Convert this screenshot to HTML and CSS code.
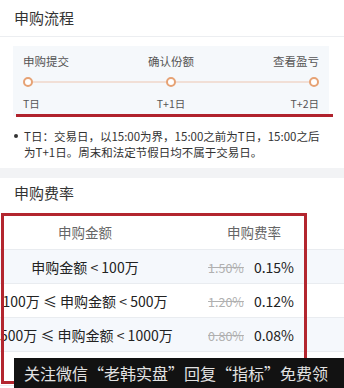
FILE: index.html
```html
<!DOCTYPE html>
<html>
<head>
<meta charset="utf-8">
<link rel="stylesheet" href="styles.css">
</head>
<body>
<div class="page">
  <div class="section-title first">申购流程</div>
  <div class="flow">
    <div class="flow-row labels">
      <span class="l">申购提交</span><span class="c">确认份额</span><span class="r">查看盈亏</span>
    </div>
    <div class="track">
      <span class="dot"></span><span class="dot"></span><span class="dot"></span>
    </div>
    <div class="flow-row dates">
      <span class="l">T日</span><span class="c">T+1日</span><span class="r">T+2日</span>
    </div>
  </div>
  <div class="note"><span class="bullet"></span><p>T日：交易日，以15:00为界，15:00之前为T日，15:00之后<br>为T+1日。周末和法定节假日均不属于交易日。</p></div>
  <div class="band"></div>
  <div class="section-title second">申购费率</div>
  <div class="table">
    <div class="tr head"><div class="c1">申购金额</div><div class="c2">申购费率</div></div>
    <div class="tr alt"><div class="c1">申购金额 &lt; 100万</div><div class="c2"><s>1.50%</s><span>0.15%</span></div></div>
    <div class="tr"><div class="c1">100万 ≤ 申购金额 &lt; 500万</div><div class="c2"><s>1.20%</s><span>0.12%</span></div></div>
    <div class="tr alt"><div class="c1">500万 ≤ 申购金额 &lt; 1000万</div><div class="c2"><s>0.80%</s><span>0.08%</span></div></div>
    <div class="tr"><div class="c1"></div><div class="c2"></div></div>
  </div>
  <div class="mark-line"></div>
  <div class="mark-box"></div>
  <div class="watermark">关注微信“老韩实盘”回复“指标”免费领</div>
</div>
</body>
</html>
```

FILE: styles.css
```css
html, body {
  margin: 0;
  padding: 0;
  background: #fff;
}
body {
  font-family: "Noto Sans CJK SC", "Noto Sans", sans-serif;
  color: #333;
}
.page {
  position: relative;
  width: 344px;
  height: 388px;
  overflow: hidden;
}
.section-title {
  padding-left: 14px;
  font-size: 15px;
  color: #333;
}
.section-title.first {
  height: 36px;
  line-height: 36px;
  border-bottom: 1px solid #eceef1;
}
.section-title.second {
  height: 36px;
  line-height: 30px;
}
.flow {
  margin: 9px 15px 0 13px;
  padding: 8px 10px 5px;
  background: #f5f8fb;
}
.flow-row {
  display: grid;
  grid-template-columns: 1fr 1fr 1fr;
}
.flow-row .l { text-align: left; }
.flow-row .c { text-align: center; }
.flow-row .r { text-align: right; }
.labels {
  font-size: 11.5px;
  line-height: 14px;
  color: #555;
}
.track {
  position: relative;
  margin-top: 9px;
  height: 10px;
  display: flex;
  justify-content: space-between;
  align-items: center;
}
.track::before {
  content: "";
  position: absolute;
  left: 4px;
  right: 4px;
  top: 4px;
  height: 2px;
  background: #f1dfd6;
}
.dot {
  position: relative;
  width: 6px;
  height: 6px;
  border: 2px solid #e6a274;
  border-radius: 50%;
  background: #fff;
}
.dates {
  margin-top: 10px;
  font-size: 10.5px;
  line-height: 14px;
  color: #555;
}
.note {
  display: flex;
  margin-top: 12px;
  padding-left: 14px;
}
.bullet {
  flex: none;
  width: 4px;
  height: 4px;
  margin: 6px 6px 0 0;
  border-radius: 50%;
  background: #333;
}
.note p {
  margin: 0;
  font-size: 11.5px;
  line-height: 16px;
  color: #333;
  white-space: nowrap;
}
.band {
  margin-top: 8px;
  height: 10px;
  background: #f2f3f5;
}
.table {
  width: 344px;
}
.tr {
  display: flex;
  height: 33px;
  border-bottom: 1px solid #e9ecf0;
  align-items: center;
  font-size: 14px;
  color: #222;
}
.tr.head {
  height: 35px;
  font-size: 13.5px;
  color: #666;
}
.tr.alt {
  background: #f5f8fc;
}
.c1 {
  width: 170px;
  text-align: center;
  white-space: nowrap;
}
.c2 {
  flex: 1;
  display: flex;
  justify-content: flex-end;
  align-items: baseline;
  padding-right: 50px;
  gap: 10px;
}
.head .c2 {
  padding-right: 63px;
}
.c2 s {
  font-size: 12.5px;
  color: #b0b0b0;
}
.mark-line {
  position: absolute;
  left: 16px;
  top: 114px;
  width: 317px;
  height: 3px;
  background: #b0222d;
}
.mark-box {
  position: absolute;
  left: 1px;
  top: 213px;
  width: 300px;
  height: 165px;
  border: 3px solid #b3262f;
}
.watermark {
  position: absolute;
  left: 14px;
  right: 0;
  top: 358px;
  bottom: 0;
  padding-left: 10px;
  background: #121212;
  color: #e2e2e2;
  font-size: 16px;
  line-height: 30px;
  white-space: nowrap;
}
```
